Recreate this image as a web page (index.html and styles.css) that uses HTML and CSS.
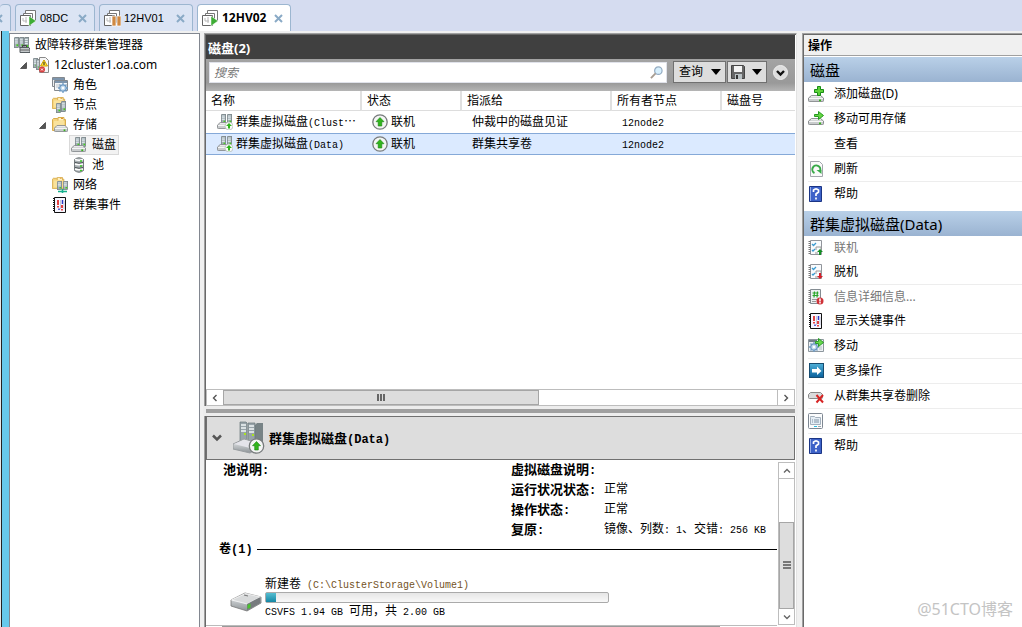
FILE: index.html
```html
<!DOCTYPE html>
<html lang="zh-CN">
<head>
<meta charset="utf-8">
<title>故障转移群集管理器</title>
<link rel="stylesheet" href="styles.css">
</head>
<body>
<svg class="defs" aria-hidden="true">
  <linearGradient id="metal" x1="0" y1="0" x2="0" y2="1"><stop offset="0" stop-color="#f2f4f5"/><stop offset="1" stop-color="#8d9397"/></linearGradient>
  <linearGradient id="teal" x1="0" y1="0" x2="0" y2="1"><stop offset="0" stop-color="#4fb0d8"/><stop offset="1" stop-color="#09609c"/></linearGradient>
  <symbol id="server" viewBox="0 0 6 12" preserveAspectRatio="none"><path d="M0 1 1 0h5v11l-1 1H0z" fill="#7f8a8e"/><path d="M1 1h4v10H1z" fill="#a3b0b5"/><path d="M1 2.500h3.500M1 4.500h3.500M1 6.500h3.500" stroke="#e9f1f4"/><path d="M3 8h2v2H3z" fill="#45d01c"/></symbol>
  <symbol id="drive" viewBox="0 0 16 8" preserveAspectRatio="none"><path d="M3.500.5h9l3 3v3q0 1-1 1h-13q-1 0-1-1v-3z" fill="#c9cccd" stroke="#85898c"/><path d="M3 2h10M1 4h14" stroke="#fafafa"/><path d="M11 5h2v2h-2z" fill="#38b51e"/></symbol>
  <symbol id="folder" viewBox="0 0 16 14" preserveAspectRatio="none"><path d="M.5 13.500v-11l1-1h4l1 1h7v11z" fill="#f5d47c" stroke="#d8ac4c"/><path d="M6 3.500v-3h6v3" fill="#fff2c2" stroke="#d8ac4c"/><path d="M9 1.500h2" stroke="#e0932c"/><path d="M2 4h10v8H2z" fill="#f9e29c"/></symbol>
  <symbol id="gear" viewBox="0 0 10 10"><circle cx="5" cy="5" r="3.200" fill="#c4dcf0" stroke="#6f9ac2" stroke-width="1.200"/><path d="M5 0v2M5 8v2M0 5h2M8 5h2M1.500 1.500 3 3M7 7l1.500 1.500M8.500 1.500 7 3M3 7 1.500 8.500" stroke="#6f9ac2" stroke-width="1.300"/><circle cx="5" cy="5" r="1.200" fill="#fff"/></symbol>
  <symbol id="manager" viewBox="0 0 16 16"><use href="#server" x="0" y="0" width="5" height="11"/><use href="#server" x="5" y="0" width="5" height="11"/><use href="#server" x="10" y="0" width="5" height="12"/><path d="M6 10.500h9l1 2v3H6z" fill="#c4c9cb" stroke="#565d61"/><path d="M6 13h10" stroke="#666"/><path d="M8.500 10V8.500h4V10" fill="none" stroke="#444"/></symbol>
  <symbol id="cluster" viewBox="0 0 16 16"><use href="#server" x="0" y="1" width="5" height="10"/><use href="#server" x="3" y="2" width="5" height="11"/><path d="M6.500.5h6l3 3v12h-9z" fill="#f6f6f6" stroke="#8a8a8a"/><path d="M11 3 14.500 9h-7z" fill="#ffe53b" stroke="#cf9f00"/><path d="M11 5v3" stroke="#222"/><circle cx="9" cy="12.500" r="3" fill="#d94040"/><path d="m8 11.500 2 2m0-2-2 2" stroke="#fff"/></symbol>
  <symbol id="roles" viewBox="0 0 16 16"><path d="M.5.5h12v9H.5z" fill="#eef0f2" stroke="#84898e"/><path d="M1 2h11" stroke="#7d95ad" stroke-width="2"/><path d="M2.500 3.500h13v10h-13z" fill="#f4f6f8" stroke="#84898e"/><path d="M3 5h12" stroke="#7d95ad" stroke-width="2"/><path d="M4 8h4M4 10h4" stroke="#bbc4cc"/><use href="#gear" x="6" y="6" width="10" height="10"/></symbol>
  <symbol id="nodes" viewBox="0 0 16 16"><use href="#folder" x="0" y="0" width="15" height="12"/><use href="#server" x="4" y="6" width="5" height="10"/><use href="#server" x="9" y="4" width="5" height="11"/></symbol>
  <symbol id="storage" viewBox="0 0 16 16"><use href="#folder" x="0" y="0" width="16" height="14"/><use href="#drive" x="2" y="8" width="14" height="7"/></symbol>
  <symbol id="disks" viewBox="0 0 16 16"><use href="#server" x="4" y="0" width="5" height="10"/><use href="#server" x="10" y="0" width="5" height="10"/><use href="#drive" x="0" y="8" width="15" height="7"/></symbol>
  <symbol id="up" viewBox="0 0 16 16"><circle cx="8" cy="8" r="7.200" fill="#f4f5f4" stroke="#777b7c" stroke-width="1.300"/><path d="m8 3.500 4 4.200H9.800V12H6.200V7.700H4z" fill="#32b51c" stroke="#168510" stroke-width=".6"/></symbol>
  <symbol id="diskup" viewBox="0 0 16 16"><use href="#disks" width="16" height="16"/><circle cx="12" cy="12" r="4" fill="#f7faf6" stroke="#a8aeac" stroke-width=".6"/><path d="m12 9 3 3h-2v2.500h-2V12H9z" fill="#2fb31c"/></symbol>
  <symbol id="pool" viewBox="0 0 12 16"><path d="M1.500 2.500q4.500-3.500 9 0v11q-4.500 3.500-9 0z" fill="#a9b0b3" stroke="#72787b"/><path d="M2 5.500q4 1.500 8 0M2 10.500q4 1.500 8 0" fill="none" stroke="#4c5255"/><path d="M2 2.500q4 1.500 8 0M2 7q4 1.500 8 0M2 12q4 1.500 8 0" fill="none" stroke="#fff" stroke-width="1.500"/><path d="M7 4h2M7 9h2M7 13.500h2" stroke="#3cc827" stroke-width="1.500"/></symbol>
  <symbol id="network" viewBox="0 0 16 16"><use href="#folder" width="14" height="12"/><use href="#server" x="5" y="4" width="5" height="9"/><use href="#server" x="11" y="4" width="5" height="9"/><path d="M6 14.500h9M10.500 12v4" stroke="#16b18d" stroke-width="1.600"/></symbol>
  <symbol id="events" viewBox="0 0 16 16"><path d="M2.500.5h11v15h-11z" fill="#f6f6ff" stroke="#111"/><path d="M2 1v14" stroke="#111" stroke-width="2" stroke-dasharray="1 1"/><path d="M6 3v5M6 9v1.500M10 8v3M10 12v1.500" stroke="#e02323" stroke-width="1.700"/><path d="M10.500 3v4M7 11.500v1.500" stroke="#2d37c5" stroke-width="1.500"/><path d="M8.500 3v9M12 4v8" stroke="#c5c8da"/></symbol>
  <symbol id="vm" viewBox="0 0 17 17"><path d="M5.500.5h10v10h-10z" fill="#fff" stroke="#777"/><path d="M3.500 3.500h9v9h-9z" fill="#fff" stroke="#777"/><path d="M.5 5.500h10v10H.5z" fill="#fff" stroke="#666"/><path d="M3 8v3h4M6 7v6" stroke="#b8b8b8" fill="none"/></symbol>
  <symbol id="vmrun" viewBox="0 0 17 17"><use href="#vm" width="17" height="17"/><path d="m9 6 7 5-7 5z" fill="#3ead35" stroke="#fff" stroke-width=".5"/></symbol>
  <symbol id="vmpause" viewBox="0 0 17 17"><use href="#vm" width="17" height="17"/><path d="M8 6h4v10H8zm5 0h4v10h-4z" fill="#cf8942" stroke="#fff" stroke-width=".7"/></symbol>
  <symbol id="close" viewBox="0 0 9 9"><path d="m1 1 7 7m0-7L1 8" stroke="#8aaac6" stroke-width="2"/></symbol>
  <symbol id="add" viewBox="0 0 16 16"><use href="#drive" y="9" width="16" height="7"/><path d="M9.500.5h3v3h3v3h-3v3h-3v-3h-3v-3h3z" fill="#5ed23a" stroke="#188d15"/></symbol>
  <symbol id="movedisk" viewBox="0 0 16 16"><use href="#drive" y="7" width="16" height="7"/><path d="M6.500 3.500h4v-3l5 4-5 4v-3h-4z" fill="#65d743" stroke="#269a20"/></symbol>
  <symbol id="refresh" viewBox="0 0 16 16"><path d="M2.500.5h9l3 3v12h-12z" fill="#fafafa" stroke="#a3a6ad"/><path d="M6.500 12A4 4 0 1 1 12 10" fill="none" stroke="#36a947" stroke-width="2"/><path d="m8.500 9 5 0v4z" fill="#36a947"/></symbol>
  <symbol id="help" viewBox="0 0 16 16"><path d="M1.500.5h12v15h-12z" fill="#3d62c8" stroke="#1b3585"/><path d="M2.500 1v14" stroke="#96aee8"/><path d="M5.500 6V4q2.500-2.500 5 0v2L8 8v2M8 11.500v2" fill="none" stroke="#fff" stroke-width="1.700"/></symbol>
  <symbol id="check" viewBox="0 0 16 16"><path d="M2.500.5h11v14h-11z" fill="#f9fbfd" stroke="#91959b"/><path d="M1.500 1v14" stroke="#777" stroke-width="2" stroke-dasharray="1 1"/><path d="m4 4 1.500 1.500L8 3m-4 7 1 1 2-2" fill="none" stroke="#3b9bd1" stroke-width="1.300"/><path d="M8 10V7h5v3M7 13h3" fill="none" stroke="#999"/></symbol>
  <symbol id="online" viewBox="0 0 16 16"><use href="#check" width="16" height="16"/><path d="m12 9 3 3h-2v3h-2v-3H9z" fill="#138f24"/></symbol>
  <symbol id="offline" viewBox="0 0 16 16"><use href="#check" width="16" height="16"/><path d="m12 15 3-3h-2V9h-2v3H9z" fill="#d51f2a"/></symbol>
  <symbol id="info" viewBox="0 0 16 16"><path d="M2.500.5h10v14h-10z" fill="#edf0f2" stroke="#848c92"/><path d="M1.500 1v14" stroke="#777" stroke-width="2" stroke-dasharray="1 1"/><path d="M4.500 4h6M4.500 6.500h6M6.500 2.500 6 8.500m3.500-6-.5 6" stroke="#28a728" stroke-width="1.200"/><path d="M4 10.500h5M4 12.500h4" stroke="#999"/><circle cx="12" cy="12" r="3.500" fill="#cf3238"/><path d="M12 9.500v3M12 13v1.500" stroke="#fff" stroke-width="1.500"/></symbol>
  <symbol id="move" viewBox="0 0 16 16"><path d="M.5 1.500h15v12H.5z" fill="#edf1f4" stroke="#8d969d"/><path d="M1 3h8" stroke="#727f8a" stroke-width="2"/><path d="M11 9h3M11 11h3" stroke="#b4bcc3"/><use href="#gear" x="1" y="4" width="10" height="10"/><path d="M7.500 3.500h3v-3l5 4-5 4v-3h-3z" fill="#68d84b" stroke="#2a9c2b"/></symbol>
  <symbol id="more" viewBox="0 0 16 16"><rect x="1.500" y=".5" width="14" height="14" fill="url(#teal)" stroke="#174c70"/><path d="M4 6h5V3.500L13.500 8 9 12V9.500H4z" fill="#fff"/></symbol>
  <symbol id="remove" viewBox="0 0 16 16"><path d="M2.500 4.500h10l2 2v3q0 1-1 1h-12q-1 0-1-1v-3z" fill="#d9dbdc" stroke="#888"/><path d="m8.500 7 6.500 7.500m0-7.500-6.500 7.500" stroke="#d72424" stroke-width="2"/></symbol>
  <symbol id="props" viewBox="0 0 16 16"><rect x=".5" y=".5" width="14" height="15" rx="1" fill="#fbfcfd" stroke="#7e8792"/><path d="M2.500 4.500v-1h4l1 1h5v7h-10z" fill="#e6eef5" stroke="#a3b0bd"/><path d="M4 7h1m1 0h5M4 9h1m1 0h5" stroke="#7e92a5"/><path d="M6 13.500h3" stroke="#29bce0"/><path d="M10 13.500h3" stroke="#9ca4aa"/></symbol>
  <symbol id="bigdrive" viewBox="0 0 32 20"><path d="m1 8 14-7 16 4v6l-14 8L1 14z" fill="url(#metal)" stroke="#777" stroke-width=".8"/><path d="m1.500 8 14-6.500L30.500 5 17 12z" fill="#d8dadb" stroke="#fff" stroke-width=".7"/><path d="m17 12v6.500L30.500 11V5z" fill="#777b7e"/><path d="m17.500 13 3-1.500v4l-3 1.500z" fill="#48c42d"/><path d="m14 3 4 1" stroke="#777"/></symbol>
  <symbol id="bigdisk" viewBox="0 0 32 34"><path d="m22 4 2-2h6v22h-8z" fill="#778386"/><path d="M7 1h6l1 1v20H7zm8 1h7v21h-7z" fill="#98a4aa" stroke="#69757a" stroke-width=".7"/><path d="M8 4h5M8 7h5M8 10h5m3-5h5m-5 3h5m-5 3h5" stroke="#f0f5f6" stroke-width="1.300"/><path d="M11 12h2v2h-2zm8 1h2v2h-2z" fill="#a9e51e"/><path d="m0 23 11-5 14 4v5l-8 5-17-4z" fill="url(#metal)" stroke="#999da0"/><path d="m1 23 10-4 13 3-7 5z" fill="#e4e4ea"/><use href="#up" x="15" y="17" width="17" height="16"/></symbol>
  <symbol id="left" viewBox="0 0 8 8"><path d="M5.500 1 2.500 4l3 3" fill="none" stroke="#555" stroke-width="1.400"/></symbol>
  <symbol id="right" viewBox="0 0 8 8"><path d="m2.500 1 3 3-3 3" fill="none" stroke="#555" stroke-width="1.400"/></symbol>
  <symbol id="upward" viewBox="0 0 8 8"><path d="m1 5.500 3-3 3 3" fill="none" stroke="#666" stroke-width="1.400"/></symbol>
  <symbol id="downward" viewBox="0 0 8 8"><path d="m1 2.500 3 3 3-3" fill="none" stroke="#666" stroke-width="1.400"/></symbol>
  <symbol id="caret" viewBox="0 0 10 6"><path d="M0 0h10L5 6z" fill="#000"/></symbol>
  <symbol id="open" viewBox="0 0 7 7"><path d="M6.500.5v6h-6z" fill="#555" stroke="#222" stroke-width=".6"/></symbol>
</svg>

<nav class="tabs" aria-label="虚拟机">
  <div class="tab tab-cut"><button class="tab-close" aria-label="关闭"><svg><use href="#close"/></svg></button></div>
  <div class="tab tab-short"><svg class="vm-icon"><use href="#vmrun"/></svg><span>08DC</span><button class="tab-close" aria-label="关闭 08DC"><svg><use href="#close"/></svg></button></div>
  <div class="tab"><svg class="vm-icon"><use href="#vmpause"/></svg><span>12HV01</span><button class="tab-close" aria-label="关闭 12HV01"><svg><use href="#close"/></svg></button></div>
  <div class="tab active"><svg class="vm-icon"><use href="#vmrun"/></svg><span>12HV02</span><button class="tab-close" aria-label="关闭 12HV02"><svg><use href="#close"/></svg></button></div>
</nav>

<main class="workspace">
  <div class="rail"></div>
  <nav class="tree" aria-label="群集">
    <ul>
      <li class="root"><svg><use href="#manager"/></svg><span>故障转移群集管理器</span></li>
      <li class="level-1"><svg class="twist"><use href="#open"/></svg><svg><use href="#cluster"/></svg><span>12cluster1.oa.com</span></li>
      <li class="level-2"><svg><use href="#roles"/></svg><span>角色</span></li>
      <li class="level-2"><svg><use href="#nodes"/></svg><span>节点</span></li>
      <li class="level-2 expanded"><svg class="twist"><use href="#open"/></svg><svg><use href="#storage"/></svg><span>存储</span></li>
      <li class="level-3"><span class="picked"><svg><use href="#disks"/></svg><span>磁盘</span></span></li>
      <li class="level-3 plain"><svg><use href="#pool"/></svg><span>池</span></li>
      <li class="level-2"><svg><use href="#network"/></svg><span>网络</span></li>
      <li class="level-2"><svg><use href="#events"/></svg><span>群集事件</span></li>
    </ul>
  </nav>

  <section class="center">
    <h1>磁盘(2)</h1>
    <div class="toolbar">
      <label class="search"><input type="text" placeholder="搜索" aria-label="搜索"><svg viewBox="0 0 14 14"><circle cx="9" cy="5" r="4" fill="#d7effc" stroke="#93abc2" stroke-width="1.300"/><path d="m6 8-5 5" stroke="#a79c91" stroke-width="2"/></svg></label>
      <div class="tool-buttons">
        <button class="tool query">查询<svg class="caret"><use href="#caret"/></svg></button>
        <button class="tool save" aria-label="保存查询"><svg class="floppy" viewBox="0 0 14 14"><path d="M.5.5h12l1 1v12H.5z" fill="#666" stroke="#444"/><path d="M3 1h8v6H3z" fill="#f4f4f4"/><path d="M4 9h7v5H4z" fill="#b9c1c4"/><path d="M5 10h2v4H5z" fill="#333"/></svg><svg class="caret"><use href="#caret"/></svg></button>
      </div>
      <button class="expand" aria-label="展开"><svg viewBox="0 0 15 15"><circle cx="7.500" cy="7.500" r="7" fill="#ddd" stroke="#eee"/><path d="m4 6 3.500 3.500L11 6" fill="none" stroke="#111" stroke-width="2.400"/></svg></button>
    </div>
    <div class="list">
      <table>
        <colgroup><col class="c-name"><col class="c-state"><col class="c-assigned"><col class="c-owner"><col></colgroup>
        <thead><tr><th>名称</th><th>状态</th><th>指派给</th><th>所有者节点</th><th>磁盘号</th></tr></thead>
        <tbody>
          <tr><td><span class="cell"><svg><use href="#diskup"/></svg><span>群集虚拟磁盘<code>(Clust</code>⋯</span></span></td><td><span class="cell"><svg><use href="#up"/></svg>联机</span></td><td>仲裁中的磁盘见证</td><td><code>12node2</code></td><td></td></tr>
          <tr class="selected"><td><span class="cell"><svg><use href="#diskup"/></svg><span>群集虚拟磁盘<code>(Data)</code></span></span></td><td><span class="cell"><svg><use href="#up"/></svg>联机</span></td><td>群集共享卷</td><td><code>12node2</code></td><td></td></tr>
        </tbody>
      </table>
    </div>
    <div class="hscroll">
      <button aria-label="向左滚动"><svg><use href="#left"/></svg></button>
      <div class="htrack"><div class="hthumb"><i></i><i></i><i></i></div></div>
      <button aria-label="向右滚动"><svg><use href="#right"/></svg></button>
    </div>
    <div class="splitter"></div>
    <h2><svg class="chevron" viewBox="0 0 10 8"><path d="m1 1.500 4 4 4-4" fill="none" stroke="#555" stroke-width="2.500"/></svg><svg class="bigdisk"><use href="#bigdisk"/></svg><span>群集虚拟磁盘<code>(Data)</code></span></h2>
    <div class="details">
      <div class="detail-body">
        <div class="facts">
          <strong>池说明<code>:</code></strong>
          <dl>
            <dt>虚拟磁盘说明<code>:</code></dt><dd></dd>
            <dt>运行状况状态<code>:</code></dt><dd>正常</dd>
            <dt>操作状态<code>:</code></dt><dd>正常</dd>
            <dt>复原<code>:</code></dt><dd>镜像、列数<code>: 1</code>、交错<code>: 256 KB</code></dd>
          </dl>
        </div>
        <h3><span>卷<code>(1)</code></span></h3>
        <div class="volume">
          <svg><use href="#bigdrive"/></svg>
          <div class="volume-info">
            <div>新建卷<code class="path"> (C:\ClusterStorage\Volume1)</code></div>
            <div class="meter"><div style="width:3%"></div></div>
            <div><code>CSVFS 1.94 GB </code>可用，共<code> 2.00 GB</code></div>
          </div>
        </div>
      </div>
      <div class="vscroll">
        <button aria-label="向上滚动"><svg><use href="#upward"/></svg></button>
        <div class="vtrack"><div class="vthumb"><i></i><i></i><i></i></div></div>
        <button aria-label="向下滚动"><svg><use href="#downward"/></svg></button>
      </div>
    </div>
    <div class="bottom-track"><div></div></div>
  </section>

  <aside class="actions">
    <h2 class="actions-title">操作</h2>
    <h3>磁盘</h3>
    <div class="group">
      <button><svg><use href="#add"/></svg>添加磁盘(D)</button>
      <button><svg><use href="#movedisk"/></svg>移动可用存储</button>
      <button><svg></svg>查看</button>
      <button><svg><use href="#refresh"/></svg>刷新</button>
      <button class="bare"><svg><use href="#help"/></svg>帮助</button>
    </div>
    <h3>群集虚拟磁盘(Data)</h3>
    <div class="group">
      <button class="bare" disabled><svg><use href="#online"/></svg>联机</button>
      <button><svg><use href="#offline"/></svg>脱机</button>
      <button class="bare" disabled><svg><use href="#info"/></svg>信息详细信息...</button>
      <button><svg><use href="#events"/></svg>显示关键事件</button>
      <button><svg><use href="#move"/></svg>移动</button>
      <button><svg><use href="#more"/></svg>更多操作</button>
      <button><svg><use href="#remove"/></svg>从群集共享卷删除</button>
      <button><svg><use href="#props"/></svg>属性</button>
      <button class="bare"><svg><use href="#help"/></svg>帮助</button>
    </div>
    <div class="watermark">@51CTO博客</div>
  </aside>
</main>
</body>
</html>
```

FILE: styles.css
```css
* { box-sizing: border-box; }

body {
  margin: 0;
  height: 100vh;
  display: flex;
  flex-direction: column;
  overflow: hidden;
  background: #f0f0f0;
  color: #000;
  font: 12px/20px "Noto Sans", "Noto Sans CJK SC", sans-serif;
}

h1, h2, h3, ul, dl, dd { margin: 0; padding: 0; }
button { font: inherit; color: inherit; border: 0; background: none; padding: 0; }
svg { display: block; flex: none; width: 16px; height: 16px; }
.defs { position: absolute; width: 0; height: 0; }
code { font: 10px "Liberation Mono", monospace; white-space: pre; }

/* Tabs */
.tabs {
  display: flex;
  align-items: flex-end;
  gap: 4px;
  height: 31px;
  flex: none;
  background: #d5dcf0;
}
.tab {
  display: flex;
  align-items: center;
  width: 94px;
  height: 27px;
  padding: 0 7px 0 4px;
  border: 1px solid #9cb6d0;
  border-bottom: 0;
  border-radius: 4px 4px 0 0;
  background: #dbe4f4;
  font: 11px/16px "Liberation Sans", sans-serif;
}
.tab-short { width: 80px; }
.tab-cut { width: 11px; padding: 0; border-left: 0; }
.tab-cut .tab-close { margin-left: -6px; }
.tab.active {
  background: #fff;
  font: bold 12px/16px "Open Sans", sans-serif;
}
.vm-icon { width: 17px; height: 17px; margin-right: 3px; }
.tab-close { margin-left: auto; }
.tab-close svg { width: 9px; height: 9px; }

/* Workspace */
.workspace { flex: 1; min-height: 0; display: flex; }
.rail {
  flex: none;
  width: 9px;
  background: #67c9eb;
  border-left: 1px solid #e8e8e8;
  box-shadow: inset 1px 0 #222;
}
.tree {
  flex: none;
  width: 191px;
  margin: 2px 4px 0 0;
  border: 1px solid #828790;
  border-bottom: 0;
  background: #fff;
}
.tree ul { list-style: none; padding-top: 1px; }
.tree li { display: flex; align-items: center; gap: 5px; height: 20px; white-space: nowrap; }
.tree .root { padding-left: 4px; }
.tree .level-1 { padding-left: 10px; }
.tree .level-2 { padding-left: 42px; }
.tree .expanded { padding-left: 29px; }
.tree .level-3 { padding-left: 59px; }
.tree .plain { padding-left: 61px; }
.tree .twist { width: 7px; height: 7px; }
.tree .level-1 .twist { margin-right: 1px; }
.tree .expanded .twist { margin-right: 1px; }
.picked {
  display: flex;
  align-items: center;
  gap: 5px;
  height: 20px;
  padding: 0 2px 0 1px;
  border: 1px solid #d9d9d9;
  background: #f2f2f2;
}

/* Centre pane */
.center {
  flex: 1;
  min-width: 0;
  display: flex;
  flex-direction: column;
  margin: 2px 5px 0 0;
  border: 1px solid #a0a0a0;
  border-right-color: #e3e3e3;
  border-bottom: 0;
  box-shadow: inset 1px 1px #696969;
  padding: 1px 1px 0;
  background: #fff;
}
.center h1 {
  height: 24px;
  padding: 1px 2px;
  background: #404040;
  color: #fff;
  font-size: 13px;
  line-height: 24px;
}
.toolbar {
  display: flex;
  align-items: flex-start;
  height: 32px;
  padding: 2px 7px 0 3px;
  background: linear-gradient(#a3a3a3, #999 75%, #b5b5b5);
}
.search {
  flex: 1;
  display: flex;
  align-items: center;
  height: 21px;
  margin: 1px 6px 0 0;
  padding: 0 3px 0 4px;
  border: 1px solid #e0e2ea;
  background: #fff;
}
.search input { flex: 1; min-width: 0; border: 0; padding: 0; outline: 0; background: none; font: inherit; }
.search input::placeholder { color: #777; font-style: italic; opacity: 1; }
.search svg { width: 13px; height: 13px; }
.tool-buttons { display: flex; gap: 1px; }
.tool {
  display: flex;
  align-items: center;
  justify-content: space-between;
  height: 22px;
  padding: 0 4px;
  border: 1px solid #707070;
  background: #ddd;
}
.query { width: 53px; padding-left: 5px; }
.save { width: 40px; padding-left: 3px; }
.floppy { width: 14px; height: 14px; }
.caret { width: 10px; height: 6px; }
.expand { margin: 4px 0 0 6px; }
.expand svg { width: 15px; height: 15px; }

.list { flex: 1; min-height: 0; overflow: hidden; }
table { width: 100%; table-layout: fixed; border-collapse: separate; border-spacing: 0; }
.c-name { width: 156px; }
.c-state { width: 100px; }
.c-assigned { width: 150px; }
.c-owner { width: 110px; }
th, td { padding: 0; text-align: left; font-weight: normal; white-space: nowrap; overflow: hidden; }
th {
  height: 20px;
  padding-left: 5px;
  border-right: 2px solid #e0e0e0;
  border-bottom: 1px solid #ddd;
  line-height: 19px;
}
th:last-child { border-right: 0; }
td { height: 22px; padding-left: 10px; line-height: 20px; border: solid transparent; border-width: 1px 0; }
td:first-child { padding-left: 11px; }
.selected td { background: #dbeaff; border-color: #85a9d8; }
.cell { display: flex; align-items: center; gap: 3px; }

.hscroll {
  flex: none;
  display: flex;
  height: 17px;
  border: 1px solid #bdbdbd;
  background: #fff;
}
.hscroll button, .vscroll button { display: grid; place-items: center; width: 16px; height: 15px; flex: none; }
.hscroll svg, .vscroll svg { width: 8px; height: 8px; }
.htrack { flex: 1; border-right: 1px solid #bdbdbd; }
.hthumb {
  display: flex;
  align-items: center;
  justify-content: center;
  gap: 1px;
  width: 57%;
  height: 15px;
  border: 1px solid #a6a6a6;
  background: #ddd;
}
.hthumb i { width: 2px; height: 7px; background: #666; }
.splitter {
  flex: none;
  height: 4px;
  margin: 3px 0;
  background: #a0a0a0;
  box-shadow: 0 0 0 3px #ededed;
}
.center h2 {
  flex: none;
  display: flex;
  align-items: center;
  height: 44px;
  padding-left: 5px;
  border: 1px solid #707070;
  background: #ddd;
  font-size: 13px;
  line-height: 20px;
  z-index: 1;
}
.center h2 code, .facts strong code, .facts dt code, .center h3 code { font-size: 12px; font-weight: bold; line-height: 16px; }
.chevron { width: 10px; height: 8px; }
.bigdisk { width: 32px; height: 34px; margin: 0 4px 0 11px; }
.details { flex: none; display: flex; gap: 1px; }
.detail-body { flex: 1; min-width: 0; padding: 1px 0 6px 12px; line-height: 16px; }
.facts { display: grid; grid-template-columns: 288px 1fr; padding-left: 5px; align-items: start; }
.facts dl { display: grid; grid-template-columns: 93px auto; grid-auto-rows: 16px; gap: 4px 0; white-space: nowrap; }
.facts strong, .facts dt { font-size: 13px; font-weight: bold; }
.center h3 {
  display: flex;
  align-items: center;
  gap: 4px;
  height: 16px;
  margin: 4px 0 19px;
  padding-left: 1px;
  font-size: 12px;
  line-height: 16px;
}
.center h3::after { content: ""; flex: 1; height: 1px; background: #000; }
.volume { display: flex; align-items: center; gap: 3px; padding-left: 12px; }
.volume > svg { width: 32px; height: 20px; margin-top: 8px; }
.volume-info { width: 344px; white-space: nowrap; }
.path { color: #735224; }
.meter { height: 11px; border: 1px solid #aaa; border-radius: 2px; background: linear-gradient(#e6e6e6, #f8f8f8); }
.meter div { height: 9px; background: linear-gradient(#56bed1, #1587a5); }
.vscroll {
  flex: none;
  display: flex;
  flex-direction: column;
  width: 17px;
  margin-top: 2px;
  border: 1px solid #bdbdbd;
}
.vtrack {
  flex: 1;
  display: flex;
  flex-direction: column;
  justify-content: flex-end;
  border-top: 1px solid #bdbdbd;
}
.vthumb {
  display: flex;
  flex-direction: column;
  align-items: center;
  justify-content: center;
  gap: 1px;
  height: 67%;
  border: 1px solid #a6a6a6;
  background: #ddd;
}
.vthumb i { width: 8px; height: 2px; background: #777; }
.bottom-track { flex: none; height: 2px; margin-right: 18px; padding: 0 57px 0 16px; border-top: 1px solid #bbb; }
.bottom-track div { height: 1px; background: #999; }

/* Actions pane */
.actions {
  position: relative;
  flex: none;
  width: 220px;
  margin-top: 2px;
  border: solid #a0a0a0;
  border-width: 1px 0 0 1px;
  box-shadow: inset 1px 1px #696969;
  padding: 1px 0 0 1px;
  background: #fff;
}
.actions-title {
  height: 21px;
  margin-bottom: 1px;
  padding-left: 4px;
  border-bottom: 1px solid #a0a0a0;
  background: #f0f0f0;
  font-size: 12px;
  line-height: 21px;
}
.actions h3 {
  height: 25px;
  padding: 0 6px;
  background: linear-gradient(#b9d0e8, #9ab3d1);
  font-size: 15px;
  font-weight: normal;
  line-height: 26px;
}
.group { padding: 0 0 0 4px; }
.group + h3 { margin-top: 5px; }
.group button {
  display: flex;
  align-items: center;
  gap: 10px;
  width: 100%;
  height: 25px;
  border-bottom: 1px solid #ededed;
  text-align: left;
}
.group .bare { height: 24px; border-bottom: 0; }
.group button:disabled { color: #777; }
.watermark {
  position: absolute;
  right: 9px;
  bottom: 7px;
  color: #c4c4c4;
  font-size: 16px;
  line-height: 22px;
}
```
